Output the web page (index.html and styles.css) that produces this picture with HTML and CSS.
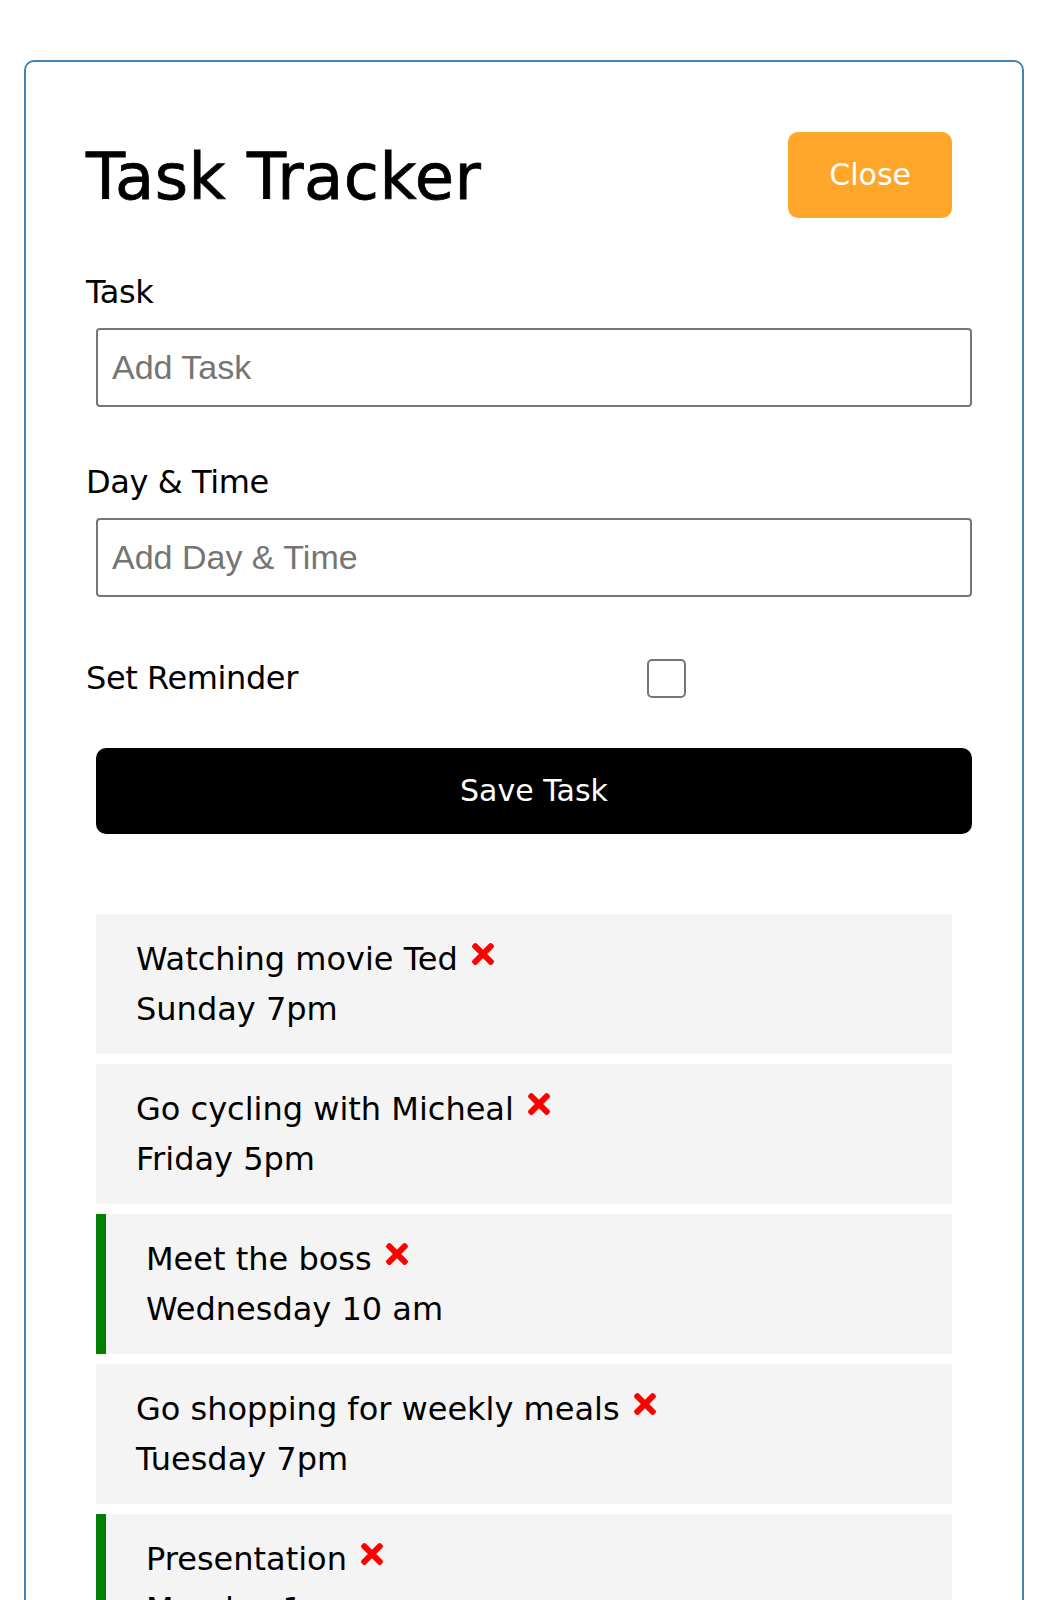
FILE: index.html
```html
<!DOCTYPE html>
<html lang="en">
<head>
<meta charset="utf-8">
<title>Task Tracker</title>
<link rel="stylesheet" href="styles.css">
</head>
<body>
<div class="container">
  <header class="header">
    <h1 class="title">Task Tracker</h1>
    <button class="btn btn-close" type="button">Close</button>
  </header>
  <form class="add-form">
    <div class="form-control">
      <label class="label">Task</label>
      <input class="input" type="text" placeholder="Add Task">
    </div>
    <div class="form-control">
      <label class="label">Day &amp; Time</label>
      <input class="input" type="text" placeholder="Add Day &amp; Time">
    </div>
    <div class="form-control form-control-check">
      <label class="label check-label">Set Reminder</label>
      <span class="check-wrap"><input class="checkbox" type="checkbox"></span>
    </div>
    <button class="btn btn-block" type="button">Save Task</button>
  </form>
  <div class="tasks">
    <div class="task">
      <h3 class="task-title">Watching movie Ted<svg class="del" viewBox="0 0 352 512"><path d="M242.72 256l100.07-100.07c12.28-12.28 12.28-32.19 0-44.48l-22.24-22.24c-12.28-12.28-32.19-12.28-44.48 0L176 189.280 75.93 89.21c-12.28-12.28-32.19-12.28-44.48 0L9.21 111.45c-12.28 12.28-12.28 32.19 0 44.48L109.28 256 9.21 356.070c-12.28 12.28-12.28 32.19 0 44.48l22.24 22.24c12.28 12.28 32.2 12.28 44.48 0L176 322.72l100.07 100.07c12.28 12.28 32.2 12.28 44.48 0l22.24-22.24c12.28-12.28 12.28-32.19 0-44.48L242.72 256z"/></svg></h3>
      <p class="task-day">Sunday 7pm</p>
    </div>
    <div class="task">
      <h3 class="task-title">Go cycling with Micheal<svg class="del" viewBox="0 0 352 512"><path d="M242.72 256l100.07-100.07c12.28-12.28 12.28-32.19 0-44.48l-22.24-22.24c-12.28-12.280-32.19-12.28-44.48 0L176 189.280 75.93 89.21c-12.28-12.28-32.19-12.28-44.48 0L9.21 111.45c-12.28 12.28-12.28 32.19 0 44.48L109.28 256 9.21 356.070c-12.28 12.28-12.28 32.19 0 44.48l22.24 22.24c12.28 12.28 32.2 12.28 44.48 0L176 322.72l100.07 100.07c12.28 12.28 32.2 12.28 44.48 0l22.24-22.24c12.28-12.28 12.28-32.19 0-44.48L242.72 256z"/></svg></h3>
      <p class="task-day">Friday 5pm</p>
    </div>
    <div class="task reminder">
      <h3 class="task-title">Meet the boss<svg class="del" viewBox="0 0 352 512"><path d="M242.72 256l100.07-100.07c12.28-12.28 12.28-32.19 0-44.48l-22.24-22.24c-12.28-12.28-32.19-12.28-44.48 0L176 189.280 75.93 89.21c-12.28-12.28-32.19-12.28-44.48 0L9.21 111.45c-12.28 12.28-12.28 32.19 0 44.48L109.28 256 9.21 356.070c-12.28 12.28-12.28 32.19 0 44.48l22.24 22.24c12.28 12.28 32.2 12.28 44.48 0L176 322.72l100.07 100.07c12.28 12.28 32.2 12.28 44.48 0l22.24-22.24c12.28-12.28 12.28-32.19 0-44.48L242.72 256z"/></svg></h3>
      <p class="task-day">Wednesday 10 am</p>
    </div>
    <div class="task">
      <h3 class="task-title">Go shopping for weekly meals<svg class="del" viewBox="0 0 352 512"><path d="M242.72 256l100.07-100.07c12.28-12.28 12.28-32.19 0-44.48l-22.24-22.24c-12.28-12.28-32.19-12.28-44.48 0L176 189.280 75.93 89.21c-12.28-12.28-32.19-12.28-44.48 0L9.21 111.45c-12.28 12.28-12.28 32.19 0 44.48L109.28 256 9.21 356.070c-12.28 12.28-12.28 32.19 0 44.48l22.24 22.24c12.28 12.28 32.2 12.28 44.48 0L176 322.72l100.07 100.07c12.28 12.28 32.2 12.28 44.48 0l22.24-22.24c12.28-12.28 12.28-32.19 0-44.48L242.72 256z"/></svg></h3>
      <p class="task-day">Tuesday 7pm</p>
    </div>
    <div class="task reminder">
      <h3 class="task-title">Presentation<svg class="del" viewBox="0 0 352 512"><path d="M242.72 256l100.07-100.07c12.28-12.28 12.28-32.19 0-44.48l-22.24-22.24c-12.28-12.28-32.19-12.28-44.48 0L176 189.280 75.93 89.21c-12.28-12.28-32.19-12.28-44.48 0L9.21 111.45c-12.28 12.28-12.28 32.19 0 44.48L109.28 256 9.21 356.070c-12.28 12.28-12.28 32.19 0 44.48l22.24 22.24c12.28 12.28 32.2 12.28 44.48 0L176 322.72l100.07 100.07c12.28 12.28 32.2 12.28 44.48 0l22.24-22.24c12.28-12.28 12.28-32.19 0-44.48L242.72 256z"/></svg></h3>
      <p class="task-day">Monday 1pm</p>
    </div>
  </div>
</div>
</body>
</html>
```

FILE: styles.css
```css
* {
  box-sizing: border-box;
  margin: 0;
  padding: 0;
}

body {
  font-family: "DejaVu Sans", "Noto Sans", sans-serif;
  color: #000;
  background: #fff;
}

.container {
  width: 1000px;
  margin: 60px 0 60px 24px;
  border: 2px solid steelblue;
  border-radius: 10px;
  padding: 60px;
}

.header {
  display: flex;
  justify-content: space-between;
  align-items: center;
  margin-bottom: 40px;
}

.title {
  font-size: 64px;
  font-weight: normal;
  line-height: 96px;
  padding-top: 4px;
  letter-spacing: 0.5px;
  -webkit-text-stroke: 0.8px #000;
}

.btn {
  display: inline-block;
  border: none;
  border-radius: 10px;
  font-family: inherit;
  font-size: 30px;
  line-height: 46px;
  padding: 20px 41px;
  margin: 10px;
  color: #fff;
  background: #000;
  cursor: pointer;
}

.btn-close {
  background: #ffa62b;
}

.btn-block {
  display: block;
  width: 100%;
  margin: 10px 0 10px 10px;
  text-align: center;
}

.add-form {
  margin-bottom: 80px;
}

.form-control {
  margin: 40px 0;
}

.label {
  display: block;
  font-size: 32px;
  line-height: 48px;
  letter-spacing: -0.4px;
}

.input {
  display: block;
  width: 100%;
  height: 79px;
  margin: 12px 0 51px 10px;
  padding: 0 14px;
  border: 2px solid #767676;
  border-radius: 4px;
  font-family: "Liberation Sans", Arial, sans-serif;
  font-size: 34px;
  color: #000;
  background: #fff;
}

.input::placeholder {
  color: #757575;
}

.form-control-check {
  display: flex;
  align-items: center;
}

.check-label {
  flex: 1;
}

.check-wrap {
  flex: 2;
  height: 60px;
  display: flex;
  align-items: center;
  justify-content: center;
  padding-right: 6px;
}

.checkbox {
  -webkit-appearance: none;
  appearance: none;
  width: 39px;
  height: 39px;
  border: 2px solid #767676;
  border-radius: 5px;
  background: #fff;
}

.task {
  background: #f4f4f4;
  margin: 10px;
  padding: 20px 40px;
}

.task.reminder {
  border-left: 10px solid green;
}

.task-title,
.task-day {
  font-size: 32px;
  font-weight: normal;
  line-height: 50px;
}

.del {
  width: 22px;
  height: 32px;
  margin-left: 14px;
  fill: red;
  vertical-align: baseline;
}
```
